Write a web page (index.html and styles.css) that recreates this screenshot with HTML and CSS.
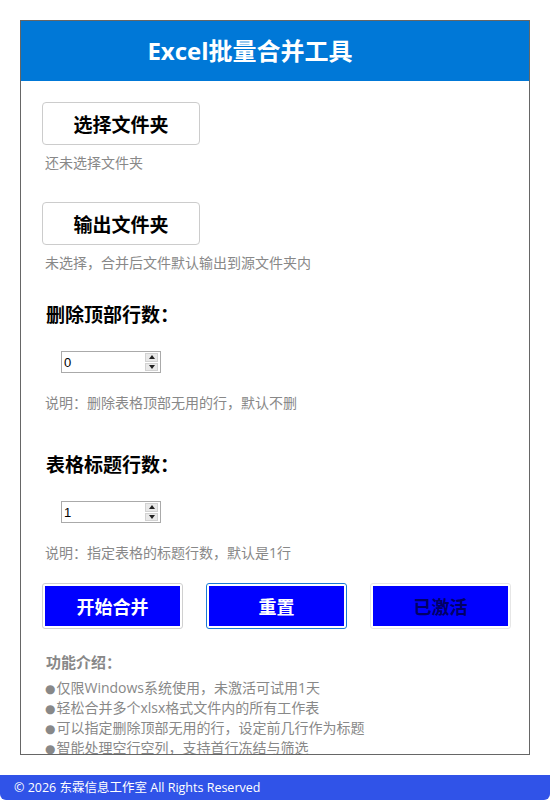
FILE: index.html
```html
<!DOCTYPE html>
<html lang="zh-CN">
<head>
  <meta charset="UTF-8">
  <meta name="viewport" content="width=device-width, initial-scale=1.0">
  <title>Excel批量合并工具</title>
  <link rel="stylesheet" href="styles.css">
</head>
<body>
  <div class="panel">
    <h1 class="title">Excel批量合并工具</h1>
    <div class="panel-body">
      <!-- 源文件夹 -->
      <button class="pick-button">选择文件夹</button>
      <p class="status">还未选择文件夹</p>

      <!-- 输出文件夹 -->
      <button class="pick-button second">输出文件夹</button>
      <p class="status">未选择，合并后文件默认输出到源文件夹内</p>

      <!-- 行数设置 -->
      <h2 class="field-label">删除顶部行数：</h2>
      <div class="spin-box">
        <input class="row-input" type="number" min="0" value="0">
        <span class="spinner"><span class="spin-up"></span><span class="spin-down"></span></span>
      </div>
      <p class="status note">说明：删除表格顶部无用的行，默认不删</p>

      <h2 class="field-label second">表格标题行数：</h2>
      <div class="spin-box">
        <input class="row-input" type="number" min="1" value="1">
        <span class="spinner"><span class="spin-up"></span><span class="spin-down"></span></span>
      </div>
      <p class="status note">说明：指定表格的标题行数，默认是1行</p>

      <div class="actions">
        <button class="action-button">开始合并</button>
        <button class="action-button focused">重置</button>
        <button class="action-button activated">已激活</button>
      </div>

      <!-- 功能介绍 -->
      <h3 class="intro-title">功能介绍：</h3>
      <ul class="intro-list">
        <li><span class="dot">●</span>仅限Windows系统使用，未激活可试用1天</li>
        <li><span class="dot">●</span>轻松合并多个xlsx格式文件内的所有工作表</li>
        <li><span class="dot">●</span>可以指定删除顶部无用的行，设定前几行作为标题</li>
        <li><span class="dot">●</span>智能处理空行空列，支持首行冻结与筛选</li>
      </ul>
    </div>
  </div>
  <footer class="footer">© 2026 东霖信息工作室 All Rights Reserved</footer>
</body>
</html>
```

FILE: styles.css
```css
/* 基本样式 */
body {
  margin: 0;
  padding: 0;
  background: #fff;
  font-family: "Open Sans", "Noto Sans CJK SC", sans-serif;
  color: #000;
}
.panel {
  width: 508px;
  height: 733px;
  margin: 20px 20px 0;
  border: 1px solid #666;
  overflow: hidden;
}
.title {
  margin: 0;
  height: 60px;
  line-height: 60px;
  padding-right: 50px;
  background: #0078d7;
  color: #fff;
  font-size: 24px;
  font-weight: bold;
  text-align: center;
}
.panel-body {
  padding: 21px 0 0 21px;
}
/* 文件夹选择按钮 */
.pick-button {
  display: block;
  width: 158px;
  height: 43px;
  padding: 0;
  background: #fff;
  border: 1px solid #ccc;
  border-radius: 4px;
  font-family: inherit;
  font-size: 19px;
  font-weight: bold;
  color: #000;
  cursor: pointer;
}
.pick-button.second {
  margin-top: 30px;
}
.status {
  margin: 9px 0 0 3px;
  font-size: 14px;
  line-height: 18px;
  color: #888;
}
.status.note {
  margin-top: 21px;
}
.field-label {
  margin: 30px 0 0 4px;
  font-size: 19px;
  line-height: 26px;
  font-weight: bold;
}
.field-label.second {
  margin-top: 40px;
}
/* 数字输入框 */
.spin-box {
  display: flex;
  box-sizing: border-box;
  width: 100px;
  height: 22px;
  margin: 23px 0 0 19px;
  border: 1px solid #aaa;
  background: #fff;
}
.row-input {
  flex: 1;
  min-width: 0;
  padding: 0 2px;
  border: none;
  outline: none;
  font-family: "Liberation Sans", Arial, sans-serif;
  font-size: 13px;
  -moz-appearance: textfield;
}
.row-input::-webkit-inner-spin-button,
.row-input::-webkit-outer-spin-button {
  -webkit-appearance: none;
  margin: 0;
}
.spinner {
  display: flex;
  flex-direction: column;
  gap: 1px;
  width: 13px;
  margin: 1px 2px 1px 0;
}
.spin-up,
.spin-down {
  flex: 1;
  display: flex;
  align-items: center;
  justify-content: center;
  background: #e9e9e9;
  border: 1px solid #d2d2d2;
  box-sizing: border-box;
}
.spin-up::after,
.spin-down::after {
  content: "";
  border-left: 3px solid transparent;
  border-right: 3px solid transparent;
}
.spin-up::after {
  border-bottom: 4px solid #222;
}
.spin-down::after {
  border-top: 4px solid #222;
}
/* 操作按钮 */
.actions {
  display: grid;
  grid-template-columns: repeat(3, 141px);
  column-gap: 23px;
  margin-top: 21px;
}
.action-button {
  height: 46px;
  padding: 2px;
  border: 1px solid #d0d0d0;
  border-radius: 3px;
  background: #00f;
  background-clip: content-box;
  color: #fff;
  font-family: inherit;
  font-size: 18px;
  font-weight: bold;
  cursor: pointer;
}
.action-button.focused {
  border-color: #1a7ad6;
}
.action-button.activated {
  border-color: #e6e6e6;
  color: #000066;
}
/* 功能介绍 */
.intro-title {
  margin: 22px 0 0 4px;
  font-size: 15px;
  line-height: 22px;
  font-weight: bold;
  color: #888;
}
.intro-list {
  list-style: none;
  margin: 5px 0 0 3px;
  padding: 0;
  font-size: 14px;
  line-height: 20px;
  color: #888;
}
.intro-list li {
  height: 20px;
}
.dot {
  font-family: "DejaVu Sans", sans-serif;
  font-size: 12px;
  line-height: 0;
  margin-right: 1px;
}
.footer {
  position: fixed;
  left: 0;
  right: 0;
  bottom: 0;
  height: 25px;
  line-height: 25px;
  padding-left: 14px;
  background: #3053e8;
  border-radius: 0 0 6px 6px;
  color: #fff;
  font-size: 12.5px;
}
```
